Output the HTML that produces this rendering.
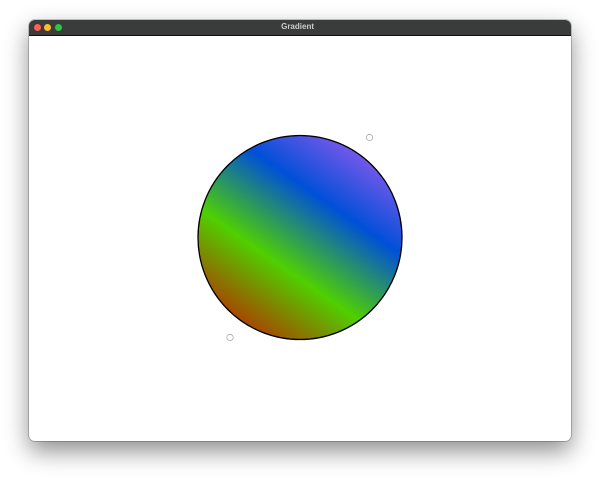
<!DOCTYPE html>
<html><head><style>
body{margin:0;width:600px;height:480px;background:#fff;position:relative;overflow:hidden;font-family:"Liberation Sans",sans-serif}
.win{position:absolute;left:29px;top:20px;width:542px;height:421px;border-radius:6px;background:#fff;box-shadow:0 10px 24px rgba(0,0,0,.45),0 0 0 1px rgba(0,0,0,.2);overflow:hidden}
.tb{height:15px;background:#3a3b3b;border-bottom:1px solid #111;position:relative}
.tb span{position:absolute;top:4px;width:7px;height:7px;border-radius:50%}
.t{position:absolute;right:257px;top:2px;font-size:8px;font-weight:bold;color:#ccc}
</style></head><body>
<div class="win"><div class="tb">
<span style="left:5px;background:#fe5f57"></span><span style="left:15px;background:#febc2e"></span><span style="left:26px;background:#28c840"></span>
<div class="t">Gradient</div></div></div>
<svg width="600" height="480" style="position:absolute;left:0;top:0">
<defs><linearGradient id="g" gradientUnits="userSpaceOnUse" x1="230" y1="337" x2="369" y2="137">
<stop offset="0" stop-color="#c02000"/><stop offset="0.36" stop-color="#4fd000"/><stop offset="0.68" stop-color="#0050d8"/><stop offset="1" stop-color="#9a5af0"/></linearGradient></defs>
<circle cx="300" cy="237.5" r="102" fill="url(#g)" stroke="#000" stroke-width="1.3"/>
<circle cx="369.5" cy="137.5" r="3.2" fill="#fff" stroke="#aaa" stroke-width="0.8"/>
<circle cx="230" cy="337.5" r="3.2" fill="#fff" stroke="#aaa" stroke-width="0.8"/>
</svg>
</body></html>
